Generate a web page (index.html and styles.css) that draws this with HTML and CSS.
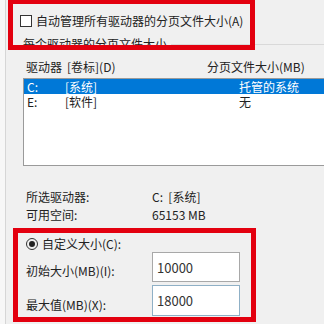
FILE: index.html
```html
<!DOCTYPE html>
<html lang="zh-CN">
<head>
  <meta charset="UTF-8">
  <title>虚拟内存</title>
  <link rel="stylesheet" href="styles.css">
</head>
<body>
  <div class="window">
    <div class="auto-row"><span class="check"></span><span>自动管理所有驱动器的分页文件大小(A)</span></div>

    <div class="group-title"><span>每个驱动器的分页文件大小</span><span class="group-line"></span></div>

    <div class="drive-head">
      <span>驱动器</span><span>[卷标](D)</span><span>分页文件大小(MB)</span>
    </div>
    <div class="drive-list">
      <div class="drive-row selected"><span>C:</span><span>[系统]</span><span>托管的系统</span></div>
      <div class="drive-row"><span>E:</span><span>[软件]</span><span>无</span></div>
    </div>

    <div class="info">
      <div class="info-row"><span class="info-key">所选驱动器:</span><span>C:&nbsp;&nbsp;[系统]</span></div>
      <div class="info-row"><span class="info-key">可用空间:</span><span>65153 MB</span></div>
    </div>

    <div class="custom">
      <div class="radio-row"><span class="radio"></span><span>自定义大小(C):</span></div>
      <div class="size-row">
        <label>初始大小(MB)(I):</label>
        <input class="size-input" value="10000">
      </div>
      <div class="size-row">
        <label>最大值(MB)(X):</label>
        <input class="size-input focused" value="18000">
      </div>
    </div>

    <!-- red highlight marks drawn over the dialog -->
    <div class="mark mark-top"></div>
    <div class="mark mark-bottom"></div>
  </div>
</body>
</html>
```

FILE: styles.css
```css
body {
  margin: 0;
  background: #f7f7f7;
  font-family: "Noto Sans CJK SC", sans-serif;
  font-size: 12px;
  color: #222;
  overflow: hidden;
}
.window {
  position: relative;
  margin-left: 5px;
  border-left: 1px solid #d6d6d6;
  background: #f0f0f0;
  height: 324px;
  overflow: hidden;
}
.auto-row {
  display: flex;
  align-items: center;
  gap: 4px;
  margin-top: 12px;
  padding-left: 14px;
  height: 18px;
  line-height: 18px;
}
.check {
  width: 10px;
  height: 10px;
  border: 1px solid #333;
  background: #fff;
}
.group-title {
  display: flex;
  align-items: center;
  gap: 4px;
  margin-top: 6px;
  padding-left: 17px;
  height: 16px;
  line-height: 16px;
}
.group-line {
  flex: 1;
  height: 1px;
  background: #d9d9d9;
}
.drive-head {
  display: grid;
  grid-template-columns: 41px 140px auto;
  margin-top: 7px;
  padding-left: 20px;
  line-height: 16px;
  height: 16px;
}
.drive-list {
  box-sizing: border-box;
  margin-top: 3px;
  margin-left: 17px;
  width: 330px;
  height: 88px;
  border: 1px solid #9a9a9a;
  background: #fff;
}
.drive-row {
  display: grid;
  grid-template-columns: 38px 174px auto;
  padding-left: 3px;
  height: 15px;
  line-height: 15px;
}
.drive-row.selected {
  background: #0078d7;
  color: #fff;
}
.info {
  margin-top: 22px;
  padding-left: 20px;
}
.info-row {
  display: flex;
  height: 18px;
  line-height: 18px;
}
.info-key { width: 126px; }
.custom {
  margin-top: 12px;
  padding-left: 20px;
}
.radio-row {
  display: flex;
  align-items: center;
  gap: 4px;
  height: 16px;
  line-height: 16px;
}
.radio {
  box-sizing: border-box;
  width: 12px;
  height: 12px;
  border: 1px solid #333;
  border-radius: 50%;
  display: flex;
  align-items: center;
  justify-content: center;
}
.radio::after {
  content: "";
  width: 6px;
  height: 6px;
  border-radius: 50%;
  background: #222;
}
.size-row {
  display: grid;
  grid-template-columns: 126px 88px;
  align-items: center;
}
.size-row + .size-row { margin-top: 3px; }
.size-row label {
  padding-top: 8px;
  line-height: 16px;
}
.size-input {
  box-sizing: border-box;
  width: 88px;
  height: 30px;
  margin: 0;
  padding: 0 4px;
  border: 1px solid #a8a8a8;
  background: #fff;
  font-family: "Noto Sans CJK SC", sans-serif;
  font-size: 13px;
  color: #333;
  outline: none;
}
.size-input.focused {
  height: 31px;
  border-color: #8fb0c6;
}
.mark {
  position: absolute;
  box-sizing: border-box;
  border: 5px solid #e3000f;
}
.mark-top {
  left: 2px;
  top: -1px;
  width: 247px;
  height: 51px;
}
.mark-bottom {
  left: 7px;
  top: 228px;
  width: 243px;
  height: 94px;
}
```
